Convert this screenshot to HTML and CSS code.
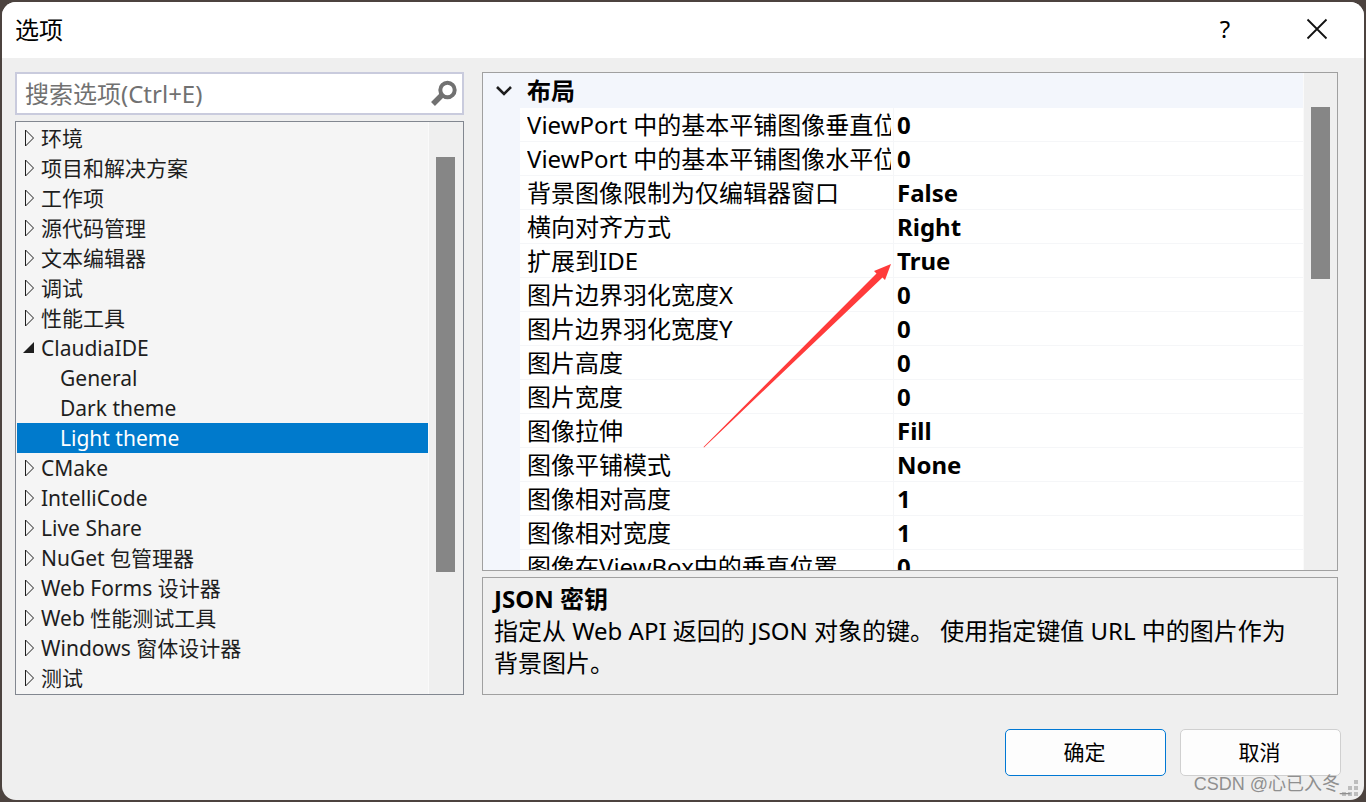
FILE: index.html
```html
<!DOCTYPE html>
<html lang="zh-CN">
<head>
    <meta charset="UTF-8">
    <meta name="viewport" content="width=device-width, initial-scale=1.0">
    <title>选项</title>
    <link rel="stylesheet" href="styles.css">
</head>
<body>
    <div class="dialog">
        <header class="titlebar">
            <h1>选项</h1>
            <button class="title-btn" type="button" aria-label="帮助">?</button>
            <button class="title-btn" type="button" aria-label="关闭">
                <svg width="22" height="22" viewBox="0 0 22 22"><path d="M1.500 1.500L20.500 20.500M20.500 1.500L1.500 20.500" stroke="#111" stroke-width="1.800" fill="none"/></svg>
            </button>
        </header>

        <main class="content">
            <section class="left">
                <div class="search">
                    <input type="text" placeholder="搜索选项(Ctrl+E)" aria-label="搜索选项">
                    <svg width="28" height="28" viewBox="0 0 28 28"><circle cx="17.500" cy="10" r="7.200" fill="none" stroke="#717171" stroke-width="4"/><path d="M12 15L3 24" stroke="#717171" stroke-width="5.500"/></svg>
                </div>
                <div class="tree">
                    <ul class="tree-list" id="tree-list"></ul>
                    <div class="scrollbar"><div class="thumb tree-thumb"></div></div>
                </div>
            </section>

            <section class="right">
                <div class="props">
                    <div class="props-view">
                        <table>
                            <colgroup>
                                <col class="col-gutter">
                                <col class="col-name">
                                <col>
                            </colgroup>
                            <thead>
                                <tr>
                                    <th><svg width="18" height="12" viewBox="0 0 18 12"><path d="M2 2L9 9L16 2" fill="none" stroke="#1e1e1e" stroke-width="2.600"/></svg></th>
                                    <th colspan="2">布局</th>
                                </tr>
                            </thead>
                            <tbody id="props-body"></tbody>
                        </table>
                    </div>
                    <div class="scrollbar props-scrollbar"><div class="thumb props-thumb"></div></div>
                    <svg class="arrow" width="192" height="188" viewBox="0 0 192 188"><path d="M189 2L183 18L180.500 15.500L2 185.500L1.500 185L174.500 11.500L172 9Z" fill="#ff3b3b"/></svg>
                </div>
                <div class="desc">
                    <h2>JSON 密钥</h2>
                    <p>指定从 Web API 返回的 JSON 对象的键。 使用指定键值 URL 中的图片作为背景图片。</p>
                </div>
            </section>
        </main>

        <footer class="actions">
            <button class="btn primary" type="button">确定</button>
            <button class="btn" type="button">取消</button>
        </footer>

        <svg class="grip" width="16" height="16" viewBox="0 0 16 16" fill="#bdbdbd">
            <path d="M12 0h4v4h-4zM6 6h4v4h-4zM12 6h4v4h-4zM0 12h4v4h-4zM6 12h4v4h-4zM12 12h4v4h-4z"/>
        </svg>
        <span class="watermark">CSDN @心已入冬_</span>
    </div>

    <script>
        const tree = [
            { name: '环境' },
            { name: '项目和解决方案' },
            { name: '工作项' },
            { name: '源代码管理' },
            { name: '文本编辑器' },
            { name: '调试' },
            { name: '性能工具' },
            { name: 'ClaudiaIDE', type: 'open' },
            { name: 'General', type: 'child' },
            { name: 'Dark theme', type: 'child' },
            { name: 'Light theme', type: 'child selected' },
            { name: 'CMake' },
            { name: 'IntelliCode' },
            { name: 'Live Share' },
            { name: 'NuGet 包管理器' },
            { name: 'Web Forms 设计器' },
            { name: 'Web 性能测试工具' },
            { name: 'Windows 窗体设计器' },
            { name: '测试' }
        ];

        const props = [
            ['ViewPort 中的基本平铺图像垂直位置', '0'],
            ['ViewPort 中的基本平铺图像水平位置', '0'],
            ['背景图像限制为仅编辑器窗口', 'False'],
            ['横向对齐方式', 'Right'],
            ['扩展到IDE', 'True'],
            ['图片边界羽化宽度X', '0'],
            ['图片边界羽化宽度Y', '0'],
            ['图片高度', '0'],
            ['图片宽度', '0'],
            ['图像拉伸', 'Fill'],
            ['图像平铺模式', 'None'],
            ['图像相对高度', '1'],
            ['图像相对宽度', '1'],
            ['图像在ViewBox中的垂直位置', '0']
        ];

        const closedIcon = '<svg width="12" height="18" viewBox="0 0 12 18"><path d="M2.500 1V17L10.500 9Z" fill="none" stroke="#1e1e1e"/></svg>';
        const openIcon = '<svg width="12" height="18" viewBox="0 0 12 18"><path d="M11 3V14H0Z" fill="#1e1e1e"/></svg>';

        document.getElementById('tree-list').innerHTML = tree.map(item => {
            const type = item.type || '';
            const icon = type === 'open' ? openIcon : type ? '' : closedIcon;
            return `<li class="${type}">${icon}${item.name}</li>`;
        }).join('');

        document.getElementById('props-body').innerHTML = props.map(([name, value]) =>
            `<tr><td class="gutter"></td><td class="name"><div>${name}</div></td><td class="value">${value}</td></tr>`
        ).join('');
    </script>
</body>
</html>
```
FILE: styles.css
```css
* {
    box-sizing: border-box;
}
body {
    margin: 0;
    padding: 2px;
    height: 100vh;
    background: #4c433f;
    font-family: "Noto Sans", "Noto Sans CJK SC", sans-serif;
    font-size: 24px;
    color: #000;
}
h1, h2, p, ul {
    margin: 0;
    padding: 0;
}
svg {
    display: block;
    flex: none;
}
button, input {
    font-family: inherit;
    color: inherit;
}
.dialog {
    position: relative;
    display: flex;
    flex-direction: column;
    height: 100%;
    background: #efefef;
    border-radius: 14px;
    overflow: hidden;
}
.titlebar {
    display: flex;
    align-items: center;
    height: 56px;
    padding: 0 1px 3px 13px;
    background: #fff;
}
.titlebar h1 {
    flex: 1;
    font-size: 24px;
    font-weight: normal;
}
.title-btn {
    display: flex;
    align-items: center;
    justify-content: center;
    width: 92px;
    height: 53px;
    padding: 0;
    border: none;
    background: none;
    font-size: 24px;
}
.content {
    flex: 1;
    display: grid;
    grid-template-columns: 449fr 856fr;
    grid-template-rows: minmax(0, 1fr);
    gap: 18px;
    min-height: 0;
    padding: 14px 26px 0 13px;
}
.left, .right {
    display: flex;
    flex-direction: column;
    gap: 6px;
    min-width: 0;
}
.search {
    display: flex;
    align-items: center;
    height: 43px;
    padding-right: 4px;
    background: #fff;
    border: 2px solid #c9cbdd;
}
.search input {
    flex: 1;
    min-width: 0;
    padding: 0 8px;
    border: none;
    outline: none;
    background: none;
    font-size: 24px;
}
.search input::placeholder {
    color: #717171;
}
.tree {
    flex: 1;
    display: flex;
    min-height: 0;
    background: #f5f5f5;
    border: 1px solid #828790;
    overflow: hidden;
}
.tree-list {
    flex: 1;
    padding: 1px 0 0 1px;
    list-style: none;
    font-size: 21px;
    line-height: 30px;
    color: #1e1e1e;
}
.tree-list li {
    display: flex;
    align-items: center;
    gap: 6px;
    height: 30px;
    padding-left: 6px;
    white-space: nowrap;
}
.tree-list .child {
    padding-left: 43px;
}
.tree-list .selected {
    background: #007acc;
    color: #fff;
}
.scrollbar {
    flex: none;
    width: 35px;
    padding: 35px 8px 0 7px;
    background: #efefef;
    border-left: 1px solid #fafafa;
}
.props-scrollbar {
    width: 34px;
    padding: 34px 7px 0;
}
.thumb {
    background: #868686;
}
.tree-thumb {
    height: 415px;
}
.props-thumb {
    height: 172px;
}
.props {
    position: relative;
    flex: 1;
    display: flex;
    min-height: 0;
    background: #fff;
    border: 1px solid #a0a0a0;
}
.props-view {
    flex: 1;
    min-width: 0;
    overflow: hidden;
}
.props table {
    width: 100%;
    table-layout: fixed;
    border-spacing: 0;
}
.col-gutter {
    width: 37px;
}
.col-name {
    width: 374px;
}
.props th {
    height: 35px;
    padding: 0 0 0 7px;
    background: #f3f6fc;
    line-height: 35px;
    text-align: left;
}
.props th:first-child {
    padding-left: 12px;
}
.props td {
    height: 34px;
    padding: 0;
    border-bottom: 1px solid #f5f6f8;
    line-height: 33px;
    white-space: nowrap;
}
.props .gutter {
    background: #f3f6fc;
    border-color: #f3f6fc;
}
.props .name {
    padding: 0 2px 0 7px;
    border-right: 1px solid #f5f6f8;
}
.name div {
    height: 33px;
    overflow: hidden;
}
.props .value {
    padding-left: 3px;
    font-weight: bold;
}
.arrow {
    position: absolute;
    left: 219px;
    top: 189px;
}
.desc {
    height: 118px;
    padding: 5px 32px 0 11px;
    border: 1px solid #a0a0a0;
    line-height: 32px;
}
.desc h2 {
    font-size: 24px;
}
.actions {
    display: flex;
    justify-content: flex-end;
    gap: 14px;
    padding: 34px 23px 24px;
}
.btn {
    width: 161px;
    height: 47px;
    padding: 0 2px 4px 0;
    background: #fdfdfd;
    border: 1px solid #d0d0d0;
    border-radius: 5px;
    font-size: 21px;
}
.btn.primary {
    border-color: #0078d4;
}
.grip {
    position: absolute;
    right: 6px;
    bottom: 4px;
}
.watermark {
    position: absolute;
    right: 14px;
    bottom: 2px;
    font-family: "Liberation Sans", "Noto Sans CJK SC", sans-serif;
    font-size: 18px;
    line-height: 28px;
    color: #8f8f8f;
}
```
